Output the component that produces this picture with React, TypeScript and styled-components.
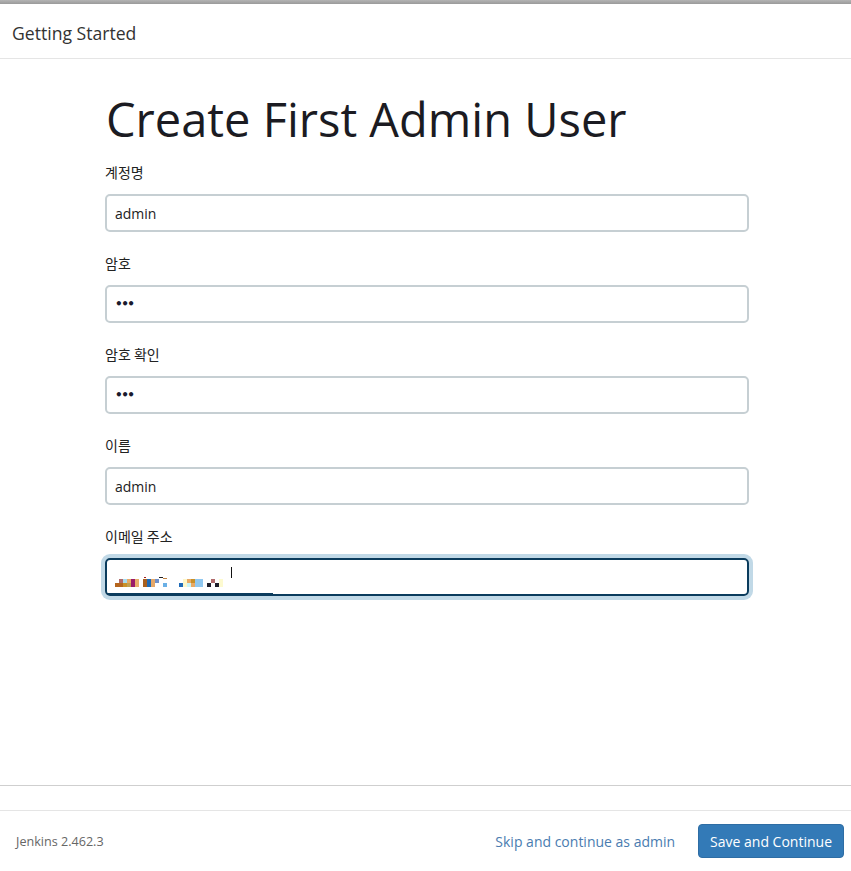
import React from "react";
import styled, { createGlobalStyle } from "styled-components";

const Global = createGlobalStyle`
  html, body { margin: 0; padding: 0; background: #fff; }
  body { font-family: "Open Sans", "Noto Sans CJK KR", sans-serif; color: #212529; }
  * { box-sizing: border-box; }
`;

const Page = styled.div`
  display: flex;
  flex-direction: column;
  height: 871px;
  background: #fff;
`;

const TopEdge = styled.div`
  height: 4px;
  background: linear-gradient(#b4b4b4, #9a9a9a);
  flex: none;
`;

const Header = styled.div`
  height: 55px;
  flex: none;
  display: flex;
  align-items: center;
  padding: 3px 12px 0;
  border-bottom: 1px solid #e5e5e5;
  font-size: 17.6px;
  color: #333;
`;

const Body = styled.div`
  flex: 1;
  border-bottom: 1px solid #cfcfcf;
  padding: 28px 102px 0 105px;
`;

const Title = styled.h1`
  margin: 0 0 11px 0;
  font-weight: 400;
  font-size: 47px;
  line-height: 64px;
  color: #1b1b22;
  padding-left: 1px;
`;

const Field = styled.div`
  display: flex;
  flex-direction: column;
  margin-bottom: 21px;
`;

const Label = styled.label`
  font-family: "Noto Sans CJK KR", sans-serif;
  font-size: 14px;
  line-height: 20px;
  color: #222;
  margin-bottom: 12px;
`;

const InputWrap = styled.div<{ $focus?: boolean }>`
  position: relative;
  height: 38px;
  border-radius: 5px;
  border: 2px solid ${(p) => (p.$focus ? "#0b3c5d" : "#c6cfd3")};
  box-shadow: ${(p) => (p.$focus ? "0 0 0 4px #c1d9e7" : "none")};
  display: flex;
  align-items: center;
  padding: 0 8px;
  font-size: 14px;
  color: #222;
`;

const Dots = styled.span`
  font-size: 12px;
  letter-spacing: -1.5px;
  color: #1a1a2e;
  font-family: "DejaVu Sans", sans-serif;
  font-weight: 700;
`;

const Underbar = styled.div`
  position: absolute;
  left: 0;
  bottom: -1px;
  width: 166px;
  height: 2px;
  background: #0b3c5d;
`;

const Caret = styled.div`
  position: absolute;
  left: 124px;
  top: 7px;
  width: 1px;
  height: 11px;
  background: #111;
`;

const Spacer = styled.div`
  height: 24px;
  flex: none;
`;

const Footer = styled.div`
  height: 61px;
  flex: none;
  border-top: 1px solid #e5e5e5;
  display: flex;
  align-items: center;
  padding: 0 7px 0 16px;
`;

const Version = styled.span`
  font-size: 12.6px;
  color: #666;
  flex: 1;
`;

const SkipLink = styled.a`
  font-size: 14px;
  color: #4a7cb0;
  text-decoration: none;
  margin-right: 23px;
`;

const PrimaryButton = styled.button`
  font-family: inherit;
  font-size: 14px;
  color: #fff;
  background: #337ab7;
  border: 1px solid #2e6da4;
  border-radius: 4px;
  height: 34px;
  padding: 0 11px;
`;

const mosaic: [number, number, number, number, string][] = [
  [4, 0, 4, 4, "#b06a6a"],
  [8, 0, 4, 4, "#a6dcef"],
  [12, 0, 4, 4, "#e8aa66"],
  [16, 0, 4, 8, "#9b1b6a"],
  [20, 0, 4, 8, "#e8ae6c"],
  [0, 4, 8, 4, "#b5651d"],
  [8, 4, 4, 4, "#c8902a"],
  [12, 4, 4, 4, "#c0a050"],
  [28, 0, 4, 8, "#a86020"],
  [29, -2, 2, 1, "#a02020"],
  [32, 0, 4, 8, "#1e6bb8"],
  [36, 0, 4, 8, "#e6a868"],
  [40, 0, 4, 4, "#7090c8"],
  [44, -2, 4, 1, "#202020"],
  [48, -1, 4, 1, "#c08040"],
  [48, 4, 4, 4, "#6ab0e6"],
  [64, 4, 4, 4, "#1e6bb8"],
  [68, 0, 4, 4, "#fdf7c8"],
  [72, 0, 4, 4, "#e8aa66"],
  [68, 4, 4, 4, "#fdf7c8"],
  [72, 4, 4, 4, "#c8f4f8"],
  [76, 0, 4, 4, "#c8902a"],
  [76, 4, 4, 4, "#e8aa66"],
  [80, 0, 8, 8, "#90c8f0"],
  [92, 4, 4, 4, "#1e1e2a"],
  [96, 0, 4, 4, "#b06a6a"],
  [100, 4, 4, 4, "#1e1e2a"],
  [104, 0, 4, 8, "#fdfad0"],
];

const Mosaic = () => (
  <svg width="110" height="11" viewBox="0 -3 110 11" style={{ display: "block", marginTop: 8 }}>
    {mosaic.map(([x, y, w, h, c], i) => (
      <rect key={i} x={x} y={y} width={w} height={h} fill={c} />
    ))}
  </svg>
);

type F = { label: string; value?: string; password?: boolean; focus?: boolean };
const fields: F[] = [
  { label: "계정명", value: "admin" },
  { label: "암호", password: true },
  { label: "암호 확인", password: true },
  { label: "이름", value: "admin" },
  { label: "이메일 주소", focus: true },
];

export default function App() {
  return (
    <Page>
      <Global />
      <TopEdge />
      <Header>Getting Started</Header>
      <Body>
        <Title>Create First Admin User</Title>
        {fields.map((f) => (
          <Field key={f.label}>
            <Label>{f.label}</Label>
            <InputWrap $focus={f.focus}>
              {f.password ? <Dots>•••</Dots> : f.focus ? (
                <>
                  <Mosaic />
                  <Caret />
                  <Underbar />
                </>
              ) : (
                f.value
              )}
            </InputWrap>
          </Field>
        ))}
      </Body>
      <Spacer />
      <Footer>
        <Version>Jenkins 2.462.3</Version>
        <SkipLink href="#">Skip and continue as admin</SkipLink>
        <PrimaryButton>Save and Continue</PrimaryButton>
      </Footer>
    </Page>
  );
}
